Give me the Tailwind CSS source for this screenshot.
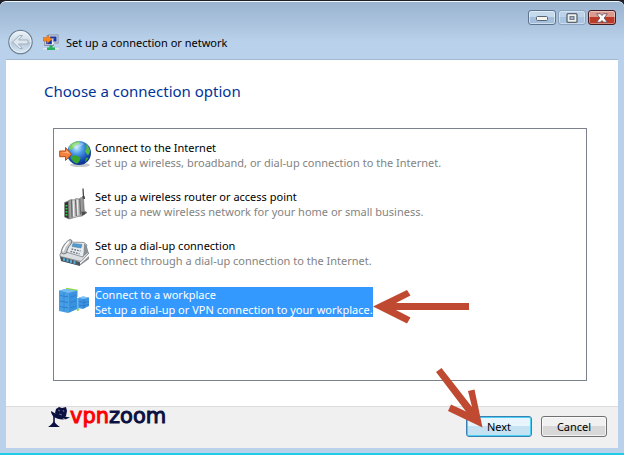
<!DOCTYPE html>
<html lang="en">
<head>
  <meta charset="UTF-8">
  <meta name="viewport" content="width=device-width, initial-scale=1.0">
  <title>Set up a connection or network</title>
  <script src="https://cdn.jsdelivr.net/npm/@tailwindcss/browser@4"></script>
</head>
<body class="bg-[#1c2026] font-['Noto_Sans','Open_Sans',sans-serif] text-[11px] leading-[15px] text-black">
  <div class="relative flex min-h-screen flex-col pt-px">
    <div class="flex grow flex-col rounded-t-md border-t border-b-2 border-t-[#eef5fb] border-b-[#1fcbe6] bg-[#b9d1ea] bg-linear-to-b from-[#9ab3cf] to-[#b9d1ea] to-[40px] px-[6px] pb-[5px]">

      <!-- Title bar -->
      <header>
        <div class="flex h-[23px] items-end justify-end gap-[2px] pr-[2px]">
          <button type="button" aria-label="Minimize" class="flex h-[15px] w-7 items-center justify-center rounded-[3px] border border-[#5c7490] bg-linear-to-b from-[#c6daed] from-50% to-[#a3bfdb] to-50% inset-ring inset-ring-white/50">
            <svg width="12" height="6" viewBox="0 0 12 6"><rect x=".5" y="1.5" width="11" height="4" rx="1" fill="#f4f4ee" stroke="#5a6472"/></svg>
          </button>
          <button type="button" aria-label="Maximize" class="flex h-[15px] w-7 items-center justify-center rounded-[3px] border border-[#8ba4c0] bg-linear-to-b from-[#bdd3e9] from-50% to-[#a9c5e1] to-50% inset-ring inset-ring-white/40">
            <svg width="12" height="10" viewBox="0 0 12 10"><rect x="1" y=".7" width="10" height="8.6" rx="1" fill="#eef0ec" stroke="#5a6472" stroke-width="1.3"/><rect x="4" y="3.7" width="4" height="2.6" fill="#b4cbe3" stroke="#5a6472"/></svg>
          </button>
          <button type="button" aria-label="Close" class="flex h-[15px] w-7 items-center justify-center rounded-[3px] border border-[#451c24] bg-linear-to-b from-[#dc9a8e] from-45% to-[#bd3a28] to-50% inset-ring inset-ring-white/40">
            <svg width="12" height="10" viewBox="0 0 12 10"><path d="M.7 .8h3.800L6 2.500 7.500.8h3.800L8.200 5l3.100 4.200H7.500L6 7.500 4.500 9.200H.7L3.800 5z" fill="#fff" stroke="#5b4a58" stroke-width=".8"/></svg>
          </button>
        </div>
        <div class="flex h-[34px] items-center gap-[10px] pl-[2px]">
          <button type="button" aria-label="Back">
            <svg width="25" height="26" viewBox="0 0 25 26">
              <defs><linearGradient id="back" x1="0" y1="0" x2="0" y2="1"><stop offset="0" stop-color="#eef4f9"/><stop offset=".48" stop-color="#ccdae7"/><stop offset=".52" stop-color="#b4c9dc"/><stop offset="1" stop-color="#dbe9f4"/></linearGradient></defs>
              <circle cx="12.500" cy="13" r="11.700" fill="url(#back)" stroke="#6d8096" stroke-width="1.200"/>
              <circle cx="12.500" cy="13" r="10.600" fill="none" stroke="#f3f8fc" stroke-opacity=".7"/>
              <path d="M4.500 13l7-6.500h3L10.500 11H20v4h-9.500l4 4.500h-3z" fill="#dfe7ee" stroke="#9fb0c0"/>
            </svg>
          </button>
          <svg width="16" height="17" viewBox="0 0 16 17">
            <rect x="5.500" y="1" width="9.500" height="8" fill="#d5dce6" stroke="#8790a2"/>
            <rect x="7" y="2.500" width="6.500" height="5" fill="#1c35a8"/>
            <rect x="1.800" y="4.500" width="8.500" height="7" fill="#dce2ea" stroke="#868da0"/>
            <rect x="3.200" y="6" width="5.600" height="4.200" fill="#1730a4"/>
            <path d="M9 6l2.500 3.500L9 11z" fill="#e9edf6"/>
            <path d="M0 3.500h4V1l5 4.300-5 4.200V7H0z" fill="#f5851f" stroke="#d06110" stroke-width=".5"/>
            <path d="M6.500 11.500h3v2H12V16H4v-2.500h2.500z" fill="#28b05a"/>
            <path d="M0 14.800h4M12 14.800h4" stroke="#dfe5e8" stroke-width="1.600"/>
          </svg>
          <h1 class="-ml-[3px]">Set up a connection or network</h1>
        </div>
      </header>

      <!-- Wizard page -->
      <main class="flex grow flex-col border-t border-[#a3b9d2] bg-white pr-[31px] pb-[25px] pl-[38px]">
        <h2 class="pt-5 text-[15px] leading-[22px] text-[#003399]">Choose a connection option</h2>
        <div class="mt-[26px] ml-[9px] grow border border-[#7c828c] px-[5px] pt-[10px]" role="listbox" aria-label="Connection options">
          <div class="flex flex-col gap-[17px]">
            <button type="button" role="option" aria-selected="false" class="flex items-center gap-1 text-left">
              <svg class="shrink-0" width="32" height="32" viewBox="0 0 32 32">
                <defs><radialGradient id="globe" cx=".4" cy=".28" r=".75"><stop offset="0" stop-color="#c9ecff"/><stop offset=".35" stop-color="#4b9be6"/><stop offset=".75" stop-color="#1648b4"/><stop offset="1" stop-color="#0c2d80"/></radialGradient></defs>
                <ellipse cx="21" cy="26" rx="10" ry="2" fill="#c4c8cb"/>
                <circle cx="20" cy="14" r="12" fill="url(#globe)"/>
                <path d="M10 8c2-4 6-6 11-5.500l-1.500 3-3 .5-2 3.500-4 1.500z" fill="#7ad05c"/>
                <path d="M11.500 18c3-2.500 8-1.500 10 1-.5 3-2 5-3.500 5.500-3-.5-5.500-3.500-6.500-6.500z" fill="#38a52e"/>
                <path d="M27 5c2.500 2 4 5 4 8l-2 3.500-3-4 1.500-3z" fill="#55bd3e"/>
                <path d="M27 18.500l2.500.5c-1 2-2 3-3.500 4z" fill="#38a52e"/>
                <path d="M13 6c4-3 9-3 12-1-3 3-8 4-11 4z" fill="#fff" opacity=".3"/>
                <path d="M.7 12h5.800V8.500l6 6.700-6 6.300v-3.800H.7z" fill="#f4813c" stroke="#bb4c16"/>
                <path d="M1.500 13h6v-2l3.500 3.700z" fill="#ffb279"/>
              </svg>
              <span><span class="block">Connect to the Internet</span><span class="block text-[#838383]">Set up a wireless, broadband, or dial-up connection to the Internet.</span></span>
            </button>
            <button type="button" role="option" aria-selected="false" class="flex items-center gap-1 text-left">
              <svg class="shrink-0" width="32" height="32" viewBox="0 0 32 32">
                <defs><linearGradient id="router" x1="0" y1="0" x2="1" y2="0"><stop offset="0" stop-color="#8f8f8f"/><stop offset=".4" stop-color="#d2d2d2"/><stop offset="1" stop-color="#6c6c6c"/></linearGradient></defs>
                <path d="M24 .5l.6 10" stroke="#4a4a4a" stroke-width="1.300"/><path d="M23.500 8h2l.6 3h-3z" fill="#444"/>
                <path d="M9 13l3-1.500 3 .5 2-1.500 3 .5 2-1.500 2.500 1 .8 12.500 2.700 1.500-5 3.500-4 .5L10 31z" fill="url(#router)" stroke="#686868" stroke-width=".6"/>
                <path d="M12.500 12l.5 17.500M16.500 11.500l.8 16.500M20.800 11l.8 15.500" stroke="#6a6a6a" stroke-width="1.300"/>
                <path d="M14.200 12.500l.5 16M18.300 12l.6 15" stroke="#f1f1f1"/>
                <path d="M5.500 14.500L9.500 13l.5 18-4.500-2z" fill="#303430" stroke="#8b8b8b" stroke-width=".7"/>
                <path d="M7.500 17v1.500M7.500 20v1.500M7.500 23v1.500M7.500 26v1.500" stroke="#36d34a" stroke-width="1.800"/>
                <path d="M22.500 23.500l4.500.8-1 2-3 1.200z" fill="#4b4b4b"/>
              </svg>
              <span><span class="block">Set up a wireless router or access point</span><span class="block text-[#838383]">Set up a new wireless network for your home or small business.</span></span>
            </button>
            <button type="button" role="option" aria-selected="false" class="flex items-center gap-1 text-left">
              <svg class="shrink-0" width="32" height="32" viewBox="0 0 32 32">
                <path d="M2 22l18 6 10-9v3l-9 6.500L2 24z" fill="#8d9296"/>
                <path d="M1 17l8-7 21 6-8 8.500-21-5z" fill="#dcdfe1" stroke="#74797e" stroke-width=".8"/>
                <path d="M1 19.500l20 5.500v4L2 24z" fill="#4d565f"/>
                <path d="M5 21.200v2.500M8.500 22.200v2.500M12 23.200v2.500M15.500 24.200v2.500" stroke="#51b5e8" stroke-width="2"/>
                <path d="M10 5L25 5.500l3 2.500-4 12-17-5z" fill="#e9ecee" stroke="#7b8187" stroke-width=".8"/>
                <path d="M14 6.500l9 1-1 3.500-9-1.500z" fill="#4f9bd4" stroke="#427494" stroke-width=".5"/>
                <path d="M12.500 12l9 2M11.500 14.300l9 2.500" stroke="#697785" stroke-width="1.300" stroke-dasharray="1.800 1"/>
                <path d="M11 2.500c-4 2-8 7-9 13l2.500 1.500 3-1c.5-3 1.500-6 4.500-9l1-3.500z" fill="#c4c8cb" stroke="#5f6468" stroke-width=".8"/>
                <path d="M10 4.500c-3 3-5 6-6 10" fill="none" stroke="#fff" stroke-width="1.400"/>
                <path d="M25 6.500l2.500 1.800 2 7-5 4z" fill="#8a9197"/>
              </svg>
              <span><span class="block">Set up a dial-up connection</span><span class="block text-[#838383]">Connect through a dial-up connection to the Internet.</span></span>
            </button>
            <button type="button" role="option" aria-selected="true" class="flex items-center gap-1 text-left">
              <svg class="shrink-0" width="32" height="32" viewBox="0 0 32 32">
                <path d="M7 2.500l11 2v6.500M18 24.500l2-1.500" fill="none" stroke="#8fdc3a" stroke-width="1.600"/>
                <path d="M0 4.500L7 3l11 2v18l-9 4-9-2z" fill="#479fe6"/>
                <path d="M0 4.500L7 3l11 2-8 2z" fill="#75bdf2"/>
                <path d="M10 7l8-2v18l-8 3.500z" fill="#3a92df"/>
                <path d="M1 9.500l8 1.500M1 15l8 1.500M1 20.500l8 1.500M11 11l6-1.500M11 16.500l6-1.500M11 22l6-2" stroke="#2c80cf"/>
                <path d="M5 6v19" stroke="#3386d2" stroke-width=".8"/>
                <path d="M19 12l5-1.500 6 1v8.500l-6 3-5-1z" fill="#3c94e2"/>
                <path d="M19 12l5-1.500 6 1-5 1.500z" fill="#83c5f5"/>
                <path d="M20 15.500l5 1 5-1M20 19l5 1 5-2M25 13v9" fill="none" stroke="#2877c5" stroke-width=".8"/>
                <path d="M18 12h1.500v11H18z" fill="#68b5ef"/>
              </svg>
              <span class="bg-[#3399ff] text-white"><span class="block">Connect to a workplace</span><span class="block">Set up a dial-up or VPN connection to your workplace.</span></span>
            </button>
          </div>
        </div>
      </main>

      <!-- Footer -->
      <footer class="flex h-[42px] items-start justify-between border-t border-[#dcdcdc] bg-[#f0f0f0] pr-[11px] pl-[42px]">
        <div class="flex items-start">
          <svg width="22" height="21" viewBox="0 0 22 21">
            <path d="M0 20c2-1 4-3.500 6-5.500C8 17 10 19 12 20z" fill="#0b1040"/>
            <path d="M6 16V9" stroke="#0b1040" stroke-width="1.600"/>
            <path d="M3 4c0 5 5 9 13 8.500L10 8z" fill="#0b1040"/>
            <path d="M8 2l3-2 3 1 4-1 1 4-1 5-3 3-5-2-3-4z" fill="#0b1040"/>
            <path d="M10 3l2 1M15 3l1 2M11 7l3 1" stroke="#68708f"/>
            <path d="M14 9l8 1.500-5 2z" fill="#0b1040"/>
          </svg>
          <span class="font-['DejaVu_Sans',sans-serif] text-[21px] leading-[18px] text-[#0b1040] [-webkit-text-stroke-width:1px]"><span class="text-[#fe0000]">vpn</span>zoom</span>
        </div>
        <div class="flex gap-[9px] pt-[9px]">
          <button type="button" class="h-[21px] w-[66px] rounded-[3px] border border-[#3c7fb1] bg-linear-to-b from-[#e9f5fc] from-50% to-[#c5e2f3] to-50% inset-ring inset-ring-[#48d1f7]">Next</button>
          <button type="button" class="h-[21px] w-[66px] rounded-[3px] border border-[#707070] bg-linear-to-b from-[#f1f1f1] from-50% to-[#d8d8d8] to-50% inset-ring inset-ring-white/70">Cancel</button>
        </div>
      </footer>
    </div>

    <!-- Pointer arrows drawn over the dialog -->
    <svg class="pointer-events-none absolute top-[289px] left-[373px]" width="97" height="36" viewBox="0 0 97 36">
      <path d="M0 17.500L34 1l3.500 5.500L23 14h73v7H23l14.500 7.500L34 34.500z" fill="#bf4a31"/>
    </svg>
    <svg class="pointer-events-none absolute top-[368px] left-[435px]" width="50" height="62" viewBox="0 0 50 62">
      <path d="M47.500 59.500L13 43l3-6.500 15 7L1 4l5.500-4L37 39l-4-16 6.500-1.500z" fill="#bf4a31"/>
    </svg>
  </div>
</body>
</html>
